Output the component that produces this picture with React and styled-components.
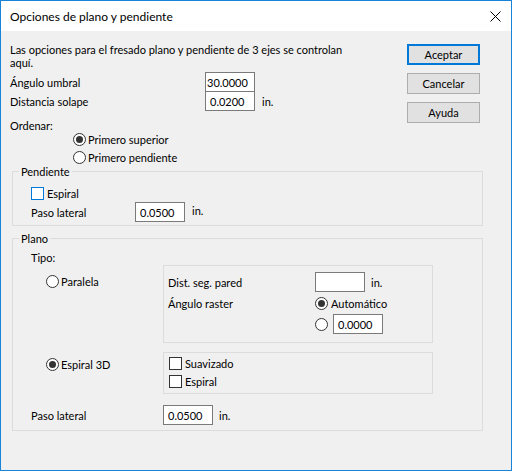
import React from "react";
import styled, { createGlobalStyle } from "styled-components";

const Global = createGlobalStyle`
  html, body {
    margin: 0;
    padding: 0;
    background: #f0f0f0;
  }
  * {
    box-sizing: border-box;
  }
`;

const Window = styled.div`
  width: 512px;
  height: 471px;
  display: flex;
  flex-direction: column;
  border: 1px solid #1883d7;
  font-family: Lato, "Liberation Sans", sans-serif;
  font-size: 11px;
  color: #000;
  background: #f0f0f0;
  overflow: hidden;
`;

const TitleBar = styled.div`
  height: 30px;
  flex: none;
  display: flex;
  align-items: center;
  justify-content: space-between;
  padding-left: 9px;
  padding-right: 10px;
  background: #fff;
  font-size: 12px;
`;

const Body = styled.div`
  flex: 1;
  padding: 12px 0 0 9px;
  line-height: 13px;
`;

const TopSection = styled.div`
  display: flex;
`;

const LeftCol = styled.div`
  flex: 1;
`;

const ButtonCol = styled.div`
  width: 73px;
  margin: 1px 31px 0 0;
  display: flex;
  flex-direction: column;
  gap: 8px;
`;

const Button = styled.button`
  width: 73px;
  height: 21px;
  padding: 0;
  font: inherit;
  color: #000;
  background: #e1e1e1;
  border: ${(p) => (p.$default ? "2px solid #0078d7" : "1px solid #adadad")};
`;

const Desc = styled.div`
  width: 340px;
`;

const FieldRow = styled.div`
  display: flex;
  align-items: center;
  height: 20px;
  margin-top: ${(p) => p.$mt || 0}px;
`;

const Label = styled.span`
  width: ${(p) => p.$w}px;
  flex: none;
`;

const Input = styled.div`
  width: 50px;
  height: 20px;
  flex: none;
  display: flex;
  align-items: center;
  padding-left: ${(p) => (p.$pl === undefined ? 4 : p.$pl)}px;
  background: #fff;
  border: 1px solid #7a7a7a;
  white-space: nowrap;
  overflow: hidden;
`;

const Unit = styled.span`
  margin-left: ${(p) => p.$ml || 7}px;
  margin-top: ${(p) => p.$mt || 0}px;
`;

const Heading = styled.div`
  margin-top: ${(p) => p.$mt || 0}px;
`;

const RadioList = styled.div`
  margin: -2px 0 0 63px;
  display: flex;
  flex-direction: column;
`;

const OptionRow = styled.label`
  display: flex;
  align-items: center;
  height: ${(p) => p.$h || 18}px;
  margin-top: ${(p) => p.$mt || 0}px;
  gap: ${(p) => (p.$gap === undefined ? 2 : p.$gap)}px;
`;

const Radio = styled.span`
  width: 13px;
  height: 13px;
  flex: none;
  display: inline-flex;
  align-items: center;
  justify-content: center;
  border-radius: 50%;
  border: 1px solid #333;
  background: #fff;
  &::after {
    content: "";
    width: 7px;
    height: 7px;
    border-radius: 50%;
    background: ${(p) => (p.$checked ? "#333" : "transparent")};
  }
`;

const Check = styled.span`
  width: 13px;
  height: 13px;
  flex: none;
  border: 1px solid ${(p) => (p.$focus ? "#0078d7" : "#333")};
  background: #fff;
`;

const Group = styled.fieldset`
  margin: ${(p) => p.$mt || 0}px 0 0 2px;
  width: 471px;
  padding: 0 0 ${(p) => p.$pb || 0}px 18px;
  border: 1px solid #dcdcdc;
  min-width: 0;
`;

const Legend = styled.legend`
  padding: 0 2px;
  margin-left: -12px;
  line-height: 13px;
`;

const TypeRow = styled.div`
  display: flex;
  margin-top: ${(p) => p.$mt || 0}px;
`;

const TypeChoice = styled.div`
  width: 132px;
  flex: none;
  padding: ${(p) => p.$pt}px 0 0 15px;
`;

const InnerBox = styled.div`
  width: 270px;
  border: 1px solid #dcdcdc;
  padding: ${(p) => p.$pad};
`;

const BoxGrid = styled.div`
  display: grid;
  grid-template-columns: 147px 1fr;
  grid-template-rows: 20px 22px 20px;
  align-items: center;
`;

const Cell = styled.div`
  display: flex;
  align-items: center;
  gap: ${(p) => p.$gap || 0}px;
`;

const CloseIcon = () => (
  <svg width="11" height="11" viewBox="0 0 11 11">
    <path d="M0.5 0.5 L10.5 10.5 M10.5 0.5 L0.5 10.5" stroke="#000" strokeWidth="1" fill="none" />
  </svg>
);

export default function App() {
  return (
    <>
      <Global />
      <Window>
        <TitleBar>
          <span>Opciones de plano y pendiente</span>
          <CloseIcon />
        </TitleBar>
        <Body>
          <TopSection>
            <LeftCol>
              <Desc>
                Las opciones para el fresado plano y pendiente de 3 ejes se controlan aquí.
              </Desc>
              <FieldRow $mt={3}>
                <Label $w={195}>Ángulo umbral</Label>
                <Input $pl={1}>30.0000</Input>
              </FieldRow>
              <FieldRow $mt={-1}>
                <Label $w={195}>Distancia solape</Label>
                <Input>0.0200</Input>
                <Unit>in.</Unit>
              </FieldRow>
              <Heading $mt={8}>Ordenar:</Heading>
              <RadioList>
                <OptionRow>
                  <Radio $checked />
                  Primero superior
                </OptionRow>
                <OptionRow>
                  <Radio />
                  Primero pendiente
                </OptionRow>
              </RadioList>
            </LeftCol>
            <ButtonCol>
              <Button $default>Aceptar</Button>
              <Button>Cancelar</Button>
              <Button>Ayuda</Button>
            </ButtonCol>
          </TopSection>

          <Group $mt={-1} $pb={3}>
            <Legend>Pendiente</Legend>
            <OptionRow $h={15} $mt={8} $gap={3}>
              <Check $focus />
              Espiral
            </OptionRow>
            <FieldRow $mt={1}>
              <Label $w={104}>Paso lateral</Label>
              <Input>0.0500</Input>
              <Unit $mt={-4}>in.</Unit>
            </FieldRow>
          </Group>

          <Group $mt={6} $pb={5}>
            <Legend>Plano</Legend>
            <Heading $mt={6}>Tipo:</Heading>
            <TypeRow $mt={1}>
              <TypeChoice $pt={9}>
                <OptionRow $h={14}>
                  <Radio />
                  Paralela
                </OptionRow>
              </TypeChoice>
              <InnerBox $pad="6px 0 8px 4px">
                <BoxGrid>
                  <span>Dist. seg. pared</span>
                  <Cell>
                    <Input />
                    <Unit $ml={6}>in.</Unit>
                  </Cell>
                  <span>Ángulo raster</span>
                  <Cell $gap={3}>
                    <Radio $checked />
                    Automático
                  </Cell>
                  <span />
                  <Cell $gap={5}>
                    <Radio />
                    <Input>0.0000</Input>
                  </Cell>
                </BoxGrid>
              </InnerBox>
            </TypeRow>
            <TypeRow $mt={9}>
              <TypeChoice $pt={5}>
                <OptionRow $h={14}>
                  <Radio $checked />
                  Espiral 3D
                </OptionRow>
              </TypeChoice>
              <InnerBox $pad="1px 0 3px 5px">
                <OptionRow $gap={3}>
                  <Check />
                  Suavizado
                </OptionRow>
                <OptionRow $gap={3}>
                  <Check />
                  Espiral
                </OptionRow>
              </InnerBox>
            </TypeRow>
            <FieldRow $mt={11}>
              <Label $w={132}>Paso lateral</Label>
              <Input>0.0500</Input>
              <Unit $ml={6}>in.</Unit>
            </FieldRow>
          </Group>
        </Body>
      </Window>
    </>
  );
}
